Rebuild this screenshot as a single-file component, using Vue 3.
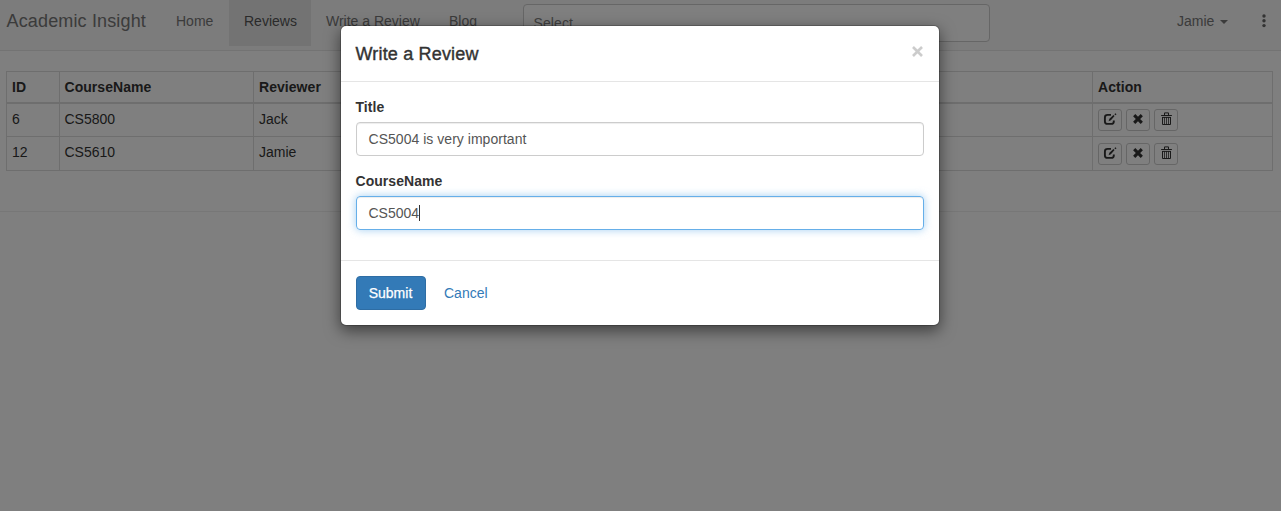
<script setup>
import { ref } from 'vue'

const navItems = [
  { label: 'Home' },
  { label: 'Reviews', active: true },
  { label: 'Write a Review' },
  { label: 'Blog' },
]
const rows = [
  { id: 6, course: 'CS5800', reviewer: 'Jack' },
  { id: 12, course: 'CS5610', reviewer: 'Jamie' },
]
const title = ref('CS5004 is very important')
const course = ref('CS5004')
</script>

<template>
  <div class="page">
    <header class="navbar">
      <a class="brand">Academic Insight</a>
      <nav class="nav">
        <a v-for="item in navItems" :key="item.label" class="nav-link" :class="{ active: item.active }">{{ item.label }}</a>
      </nav>
      <div class="search">Select</div>
      <div class="user">Jamie<span class="caret"></span></div>
      <svg class="dots" width="4" height="14" viewBox="0 0 4 14">
        <circle cx="2" cy="2" r="1.7" /><circle cx="2" cy="6.8" r="1.7" /><circle cx="2" cy="11.6" r="1.7" />
      </svg>
    </header>

    <main class="main">
      <table class="table">
        <colgroup>
          <col class="c-id" /><col class="c-course" /><col class="c-reviewer" /><col /><col class="c-action" />
        </colgroup>
        <thead>
          <tr><th>ID</th><th>CourseName</th><th>Reviewer</th><th></th><th>Action</th></tr>
        </thead>
        <tbody>
          <tr v-for="row in rows" :key="row.id">
            <td>{{ row.id }}</td>
            <td>{{ row.course }}</td>
            <td>{{ row.reviewer }}</td>
            <td></td>
            <td>
              <div class="actions">
                <button class="btn-xs">
                  <svg width="14" height="14" viewBox="0 0 14 14">
                    <path d="M8 2.9H4.6Q1.9 2.9 1.9 5.4V9.4Q1.9 11.9 4.6 11.9H8.2Q10.8 11.9 10.8 9.4V8.4" fill="none" stroke="#333" stroke-width="1.9" />
                    <path d="M5.6 9.2L6.4 6.7L10.4 2.9L11.6 4.1L7.9 8.3Z M11.4 2.2L12.4 1.2L13.5 2.2L12.5 3.2Z" fill="#333" />
                  </svg>
                </button>
                <button class="btn-xs">
                  <svg width="12" height="12" viewBox="0 0 12 12">
                    <path d="M2.2 2.2L9.8 9.8M9.8 2.2L2.2 9.8" stroke="#333" stroke-width="3.1" />
                  </svg>
                </button>
                <button class="btn-xs trash">
                  <svg width="12" height="14" viewBox="0 0 12 14">
                    <path d="M3.5 3V.9H7.5V3" fill="none" stroke="#333" stroke-width="1" />
                    <path d="M0 4.1V3.6Q0 2.9 .7 2.9H10.3Q11 2.9 11 3.6V4.1Z" fill="#333" />
                    <path d="M1.5 5V12.5H9.5V5M1.5 5.4H9.5" fill="none" stroke="#333" stroke-width="1" />
                    <path d="M3.5 5V12.5M5.5 5V12.5M7.5 5V12.5" fill="none" stroke="#333" stroke-width=".8" />
                  </svg>
                </button>
              </div>
            </td>
          </tr>
        </tbody>
      </table>
      <hr class="rule" />
    </main>

    <div class="backdrop">
      <section class="modal">
        <div class="modal-header">
          <h4>Write a Review</h4>
          <svg class="close" width="11" height="11" viewBox="0 0 10 10">
            <path d="M.9.9L9.1 9.1M9.1.9L.9 9.1" />
          </svg>
        </div>
        <form class="modal-body" @submit.prevent>
          <div class="group">
            <label>Title</label>
            <div class="control">{{ title }}</div>
          </div>
          <div class="group">
            <label>CourseName</label>
            <div class="control focused">{{ course }}<span class="cursor"></span></div>
          </div>
        </form>
        <div class="modal-footer">
          <button class="btn primary">Submit</button>
          <button class="btn link">Cancel</button>
        </div>
      </section>
    </div>
  </div>
</template>

<style>
body { background: #fff; overflow: hidden; }
</style>

<style scoped>
.page, .page * { box-sizing: border-box; }
.page {
  position: relative;
  height: 511px;
  overflow: hidden;
  font: 14px/20px "Liberation Sans", Arial, sans-serif;
  color: #333;
}
.navbar {
  display: flex;
  align-items: flex-start;
  height: 51px;
  padding-left: 6.5px;
  background: #f8f8f8;
  border-bottom: 1px solid #e7e7e7;
  color: #777;
}
.brand { width: 154.5px; padding-top: 11px; font-size: 18px; letter-spacing: .15px; white-space: nowrap; }
.nav { display: flex; width: 362px; }
.nav-link { height: 46px; padding: 11px 15px 0; white-space: nowrap; }
.nav-link:first-child { width: 68px; }
.nav-link:nth-child(2) { width: 82px; }
.nav-link:nth-child(3) { width: 123px; }
.nav-link.active { background: #e7e7e7; color: #555; }
.search {
  width: 467px;
  height: 38px;
  margin-top: 4px;
  padding: 8px 9.5px;
  background: #fff;
  border: 1px solid #ccc;
  border-radius: 4px;
  color: #808080;
  letter-spacing: .1px;
}
.user { display: flex; align-items: center; margin: 11px 0 0 187px; height: 20px; }
.caret { margin: 2px 0 0 6px; border: 4px solid transparent; border-top-color: #777; border-bottom: 0; }
.dots { margin: 14px 0 0 34px; fill: #666; }

.main { padding: 20px 8px 0 6px; }
.table {
  width: 1267px;
  table-layout: fixed;
  border-collapse: separate;
  border-spacing: 0;
  border: solid #ddd;
  border-width: 1px 0 0 1px;
}
.c-id { width: 53px; }
.c-course { width: 194px; }
.c-reviewer { width: 195px; }
.c-action { width: 180px; }
th, td {
  padding: 5px;
  height: 33px;
  text-align: left;
  vertical-align: top;
  border: solid #ddd;
  border-width: 0 1px 1px 0;
}
th { height: 32px; border-bottom-width: 2px; letter-spacing: .05px; }
th:nth-child(2), td:nth-child(2) { padding-left: 4.5px; }
tbody tr:last-child td { height: 34px; }
.actions { display: flex; gap: 4px; height: 22px; }
tbody tr:last-child .actions { padding-top: 1px; height: 23px; }
.btn-xs {
  display: flex;
  align-items: center;
  justify-content: center;
  width: 24px;
  height: 22px;
  padding: 0 0 2px;
  background: #fff;
  border: 1px solid #ccc;
  border-radius: 3px;
}
.btn-xs svg { flex: none; }
.trash { padding: 0 0 2px 2px; }
.rule { margin: 40px -8px 0 -6px; border: 0; border-top: 1px solid #eee; }

.backdrop {
  position: absolute;
  inset: 0;
  background: rgba(0, 0, 0, .5);
  padding: 25px 0 0 340px;
}
.modal {
  width: 600px;
  height: 301px;
  background: #fff;
  background-clip: padding-box;
  border: 1px solid rgba(0, 0, 0, .2);
  border-radius: 6px;
  box-shadow: 0 5px 15px rgba(0, 0, 0, .5);
}
.modal-header {
  display: flex;
  justify-content: space-between;
  height: 56px;
  padding: 15px 15px 15px 14.5px;
  border-bottom: 1px solid #e5e5e5;
}
h4 { margin: 0; font-size: 18px; line-height: 26px; font-weight: 500; letter-spacing: .17px; -webkit-text-stroke: .4px #333; }
.close { margin: 5px 1.5px 0 0; fill: none; stroke: #ccc; stroke-width: 2.4; }
.modal-body { height: 178px; padding: 15px; }
.group { margin-bottom: 15px; }
label { display: block; margin: 0 0 5px -.5px; font-weight: 700; letter-spacing: .05px; }
.control {
  display: flex;
  height: 34px;
  padding: 6px 11.5px;
  border: 1px solid #ccc;
  border-radius: 4px;
  color: #555;
  letter-spacing: .03px;
  box-shadow: inset 0 1px 1px rgba(0, 0, 0, .075);
}
.focused {
  border-color: #66afe9;
  letter-spacing: 0;
  box-shadow: inset 0 1px 1px rgba(0, 0, 0, .075), 0 0 8px rgba(102, 175, 233, .6);
}
.cursor { width: 1px; height: 16px; margin: 2px 0 0 -.5px; background: #333; }
.modal-footer { display: flex; gap: 5px; padding: 15px; border-top: 1px solid #e5e5e5; }
.btn {
  height: 34px;
  padding: 0 12px;
  border: 1px solid transparent;
  border-radius: 4px;
  background: none;
  font: inherit;
}
.primary { width: 70px; padding: 0 12px 0 11px; background: #337ab7; border-color: #2e6da4; color: #fff; -webkit-text-stroke: .25px #fff; }
.link { color: #337ab7; }
</style>
